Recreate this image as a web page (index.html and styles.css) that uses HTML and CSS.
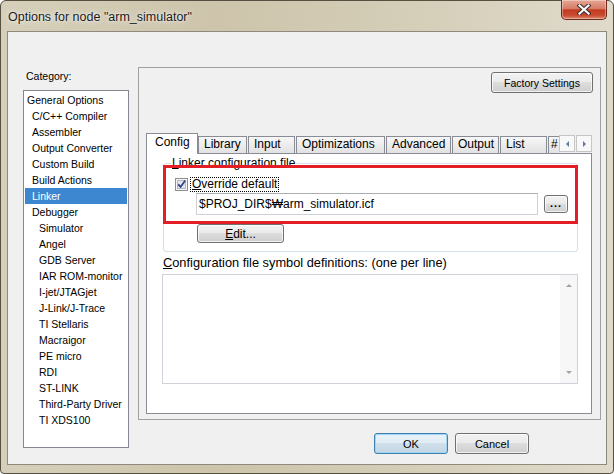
FILE: index.html
```html
<!DOCTYPE html>
<html>
<head>
<meta charset="utf-8">
<link rel="stylesheet" href="styles.css">
</head>
<body>
<div class="window">
  <div class="titlebar">
    <span class="title">Options for node "arm_simulator"</span>
    <div class="close">
      <svg width="14" height="11" viewBox="0 0 14 11"><path d="M2.5 1.5 L11.5 9.5 M11.5 1.5 L2.5 9.5" stroke="#3b2b2b" stroke-width="4.2" stroke-linecap="square" fill="none"/><path d="M2.5 1.5 L11.5 9.5 M11.5 1.5 L2.5 9.5" stroke="#fff" stroke-width="2.2" stroke-linecap="square" fill="none"/></svg>
    </div>
  </div>
  <div class="client">
    <div class="left">
      <div class="cat-label">Category:</div>
      <ul class="list">
        <li class="l0">General Options</li>
        <li class="l1">C/C++ Compiler</li>
        <li class="l1">Assembler</li>
        <li class="l1">Output Converter</li>
        <li class="l1">Custom Build</li>
        <li class="l1">Build Actions</li>
        <li class="l1 sel">Linker</li>
        <li class="l1">Debugger</li>
        <li class="l2">Simulator</li>
        <li class="l2">Angel</li>
        <li class="l2">GDB Server</li>
        <li class="l2">IAR ROM-monitor</li>
        <li class="l2">I-jet/JTAGjet</li>
        <li class="l2">J-Link/J-Trace</li>
        <li class="l2">TI Stellaris</li>
        <li class="l2">Macraigor</li>
        <li class="l2">PE micro</li>
        <li class="l2">RDI</li>
        <li class="l2">ST-LINK</li>
        <li class="l2">Third-Party Driver</li>
        <li class="l2">TI XDS100</li>
      </ul>
    </div>
    <div class="right">
      <div class="panel">
        <div class="panel-top"><button class="btn factory">Factory Settings</button></div>
        <div class="tabs">
          <div class="tabstrip">
            <div class="tab active t-config">Config</div>
            <div class="tab t-library">Library</div>
            <div class="tab t-input">Input</div>
            <div class="tab t-optim">Optimizations</div>
            <div class="tab t-adv">Advanced</div>
            <div class="tab t-output">Output</div>
            <div class="tab t-list">List</div>
            <div class="tab t-more">#</div>
          </div>
          <div class="tab-arrows">
            <div class="arrow"><span class="tri-left"></span></div>
            <div class="arrow"><span class="tri-right"></span></div>
          </div>
        </div>
        <div class="page">
          <div class="group">
            <span class="legend"><u>L</u>inker configuration file</span>
            <div class="check-row">
              <svg class="checkbox" width="13" height="13" viewBox="0 0 13 13"><rect x="0.5" y="0.5" width="12" height="12" fill="#f6f6f6" stroke="#8e8f8f"/><rect x="2.5" y="2.5" width="8" height="8" fill="#e2e6ec" stroke="#b3b8bf"/><path d="M3.2 6.3 L5.6 8.9 L10.2 2.6" stroke="#2c3e8c" stroke-width="1.7" fill="none"/></svg>
              <span class="focus"><u>O</u>verride default</span>
            </div>
            <div class="path-row">
              <div class="textbox">$PROJ_DIR$₩arm_simulator.icf</div>
              <button class="btn browse">...</button>
            </div>
            <button class="btn edit"><span><u>E</u>dit...</span></button>
          </div>
          <div class="defs-label"><u>C</u>onfiguration file symbol definitions: (one per line)</div>
          <div class="defs-box">
            <div class="vscroll"><span class="tri-up"></span><span class="tri-down"></span></div>
          </div>
          <div class="highlight"></div>
        </div>
      </div>
      <div class="dlg-buttons">
        <button class="btn dlg ok">OK</button>
        <button class="btn dlg">Cancel</button>
      </div>
    </div>
  </div>
</div>
</body>
</html>
```
FILE: styles.css
```css
* { box-sizing: border-box; }
html, body { margin: 0; padding: 0; }
body {
  width: 614px;
  height: 474px;
  overflow: hidden;
  font-family: "Liberation Sans", Arial, sans-serif;
  color: #000;
  background: #fff;
}
.window {
  width: 614px;
  height: 474px;
  border: 1px solid #55503f;
  border-radius: 6px 6px 4px 4px;
  background: linear-gradient(90deg, #d6cfba 0%, #cdc4ab 35%, #d4cdb7 65%, #dfdacb 100%);
  padding: 0 6px 8px;
  display: flex;
  flex-direction: column;
}
.titlebar {
  height: 30px;
  flex: none;
  display: flex;
  align-items: flex-start;
  justify-content: space-between;
  padding-left: 1px;
}
.title {
  font-size: 12.5px;
  line-height: 14px;
  margin-top: 9px;
  white-space: nowrap;
  color: #1a1a1a;
  text-shadow: 0 0 6px rgba(255,255,255,.9), 0 0 2px rgba(255,255,255,.8);
}
.close {
  width: 46px;
  height: 20px;
  margin-top: -1px;
  border: 1px solid #6f2a1f;
  border-top: none;
  border-radius: 0 0 5px 5px;
  background: linear-gradient(#e6a797 0%, #d67c66 45%, #c23b21 52%, #c84a2f 80%, #dc8a6d 100%);
  box-shadow: inset 0 0 0 1px rgba(255,255,255,.35);
  display: flex;
  align-items: center;
  justify-content: center;
}
.client {
  height: 434px;
  flex: none;
  display: flex;
  background: #f0f0f0;
  border: 1px solid #8f8b7c;
}
.left {
  margin-left: 15px;
  width: 106px;
  padding-top: 37px;
  display: flex;
  flex-direction: column;
}
.cat-label {
  font-size: 10.5px;
  line-height: 14px;
  padding-left: 3px;
  margin-bottom: 7px;
}
.list {
  margin: 0;
  padding: 1px 1px 0;
  list-style: none;
  height: 358px;
  border: 1px solid #828790;
  background: #fff;
}
.list li {
  height: 16px;
  line-height: 16px;
  font-size: 10.5px;
  white-space: nowrap;
}
.l0 { padding-left: 2px; }
.l1 { padding-left: 7px; }
.l2 { padding-left: 14px; }
.list .sel { background: #3d87d0; color: #fff; }

.right {
  margin-left: 9px;
  width: 463px;
  display: flex;
  flex-direction: column;
}
.panel {
  margin-top: 35px;
  height: 353px;
  border: 1px solid #a0a0a0;
  padding: 4px 7px 0 7px;
  display: flex;
  flex-direction: column;
}
.panel-top { display: flex; justify-content: flex-end; }

.btn {
  font-family: inherit;
  color: #000;
  border: 1px solid #707070;
  border-radius: 3px;
  background: linear-gradient(#f2f2f2 0%, #ebebeb 45%, #dddddd 50%, #cfcfcf 100%);
  box-shadow: inset 0 0 0 1px rgba(255,255,255,.7);
  padding: 0;
  display: flex;
  align-items: center;
  justify-content: center;
  white-space: nowrap;
}
.factory { width: 102px; height: 21px; font-size: 10.5px; }

.tabs {
  margin-top: 40px;
  height: 21px;
  width: 446px;
  display: flex;
  flex: none;
}
.tabstrip {
  flex: 1;
  display: flex;
  align-items: flex-end;
  overflow: hidden;
}
.tab {
  flex: none;
  height: 18px;
  border: 1px solid #898c95;
  border-bottom: none;
  background: linear-gradient(#f7f7f7, #e0e0e0);
  font-size: 12px;
  line-height: 15px;
  padding-left: 5px;
  margin-left: 1px;
  white-space: nowrap;
  overflow: hidden;
}
.tab.active {
  height: 21px;
  background: #fff;
  padding-left: 8px;
  padding-top: 1px;
  position: relative;
  z-index: 1;
  margin-left: 0;
}
.t-config { width: 52px; }
.t-library { width: 49px; margin-left: 0; }
.t-input { width: 47px; }
.t-optim { width: 89px; }
.t-adv { width: 65px; }
.t-output { width: 47px; }
.t-list { width: 47px; }
.t-more { width: 40px; padding-left: 2px; }
.tab-arrows {
  flex: none;
  width: 33px;
  height: 17px;
  margin-top: 2px;
  display: flex;
  gap: 1px;
  background: #f0f0f0;
}
.arrow {
  width: 16px;
  height: 17px;
  border: 1px solid #c6c6c6;
  background: #f8f8f8;
  display: flex;
  align-items: center;
  justify-content: center;
}
.tri-left { width: 0; height: 0; border-top: 3px solid transparent; border-bottom: 3px solid transparent; border-right: 3px solid #5d77a8; }
.tri-right { width: 0; height: 0; border-top: 3px solid transparent; border-bottom: 3px solid transparent; border-left: 3px solid #5d77a8; }

.page {
  position: relative;
  width: 446px;
  height: 261px;
  margin-top: -1px;
  border: 1px solid #898c95;
  background: #fff;
  display: flex;
  flex-direction: column;
  align-items: flex-start;
}
.group {
  margin: 9px 0 0 16px;
  width: 415px;
  border: 1px solid #d5dfe5;
  border-radius: 3px;
  padding: 0 0 8px 0;
  display: flex;
  flex-direction: column;
  align-items: flex-start;
}
.legend {
  margin: -8px 0 0 7px;
  padding: 0 1px;
  background: #fff;
  font-size: 12px;
  line-height: 14px;
}
.check-row {
  margin: 7px 0 0 11px;
  display: flex;
  align-items: center;
  height: 15px;
}
.checkbox { display: block; flex: none; }
.focus {
  margin-left: 2px;
  height: 15px;
  border: 1px dotted #000;
  padding: 0 1px;
  font-size: 12px;
  line-height: 13px;
}
.path-row {
  margin: 1px 0 0 32px;
  display: flex;
  align-items: center;
  gap: 6px;
}
.textbox {
  width: 342px;
  height: 22px;
  border: 1px solid #cdd1d7;
  border-top-color: #abadb3;
  font-size: 12px;
  line-height: 20px;
  padding-left: 2px;
  white-space: nowrap;
}
.browse { width: 24px; height: 18px; font-size: 11px; font-weight: bold; line-height: 10px; padding-bottom: 3px; letter-spacing: 1px; }
.edit { margin: 9px 0 0 33px; width: 87px; height: 19px; font-size: 12px; }

.defs-label {
  margin: 3px 0 0 16px;
  font-size: 12.8px;
  line-height: 15px;
  white-space: nowrap;
}
.defs-box {
  margin: 4px 0 0 15px;
  width: 416px;
  height: 110px;
  border: 1px solid #cfd2d8;
  display: flex;
  justify-content: flex-end;
}
.vscroll {
  width: 17px;
  height: 100%;
  background: #f7f7f7;
  display: flex;
  flex-direction: column;
  justify-content: space-between;
  align-items: center;
  padding: 9px 0;
}
.tri-up { width: 0; height: 0; border-left: 3px solid transparent; border-right: 3px solid transparent; border-bottom: 3px solid #a4a4a4; }
.tri-down { width: 0; height: 0; border-left: 3px solid transparent; border-right: 3px solid transparent; border-top: 3px solid #a4a4a4; }

.highlight {
  position: absolute;
  left: 16px;
  top: 11px;
  width: 415px;
  height: 59px;
  border: 3px solid #e41e26;
  pointer-events: none;
}

.dlg-buttons {
  margin-top: 13px;
  display: flex;
  justify-content: flex-end;
  gap: 7px;
  padding-right: 72px;
}
.dlg { width: 74px; height: 21px; font-size: 11px; }
.ok {
  border-color: #3c7fb1;
  background: linear-gradient(#eaf3f9 0%, #e1ecf4 45%, #d0dfea 50%, #c3d5e4 100%);
  box-shadow: inset 0 0 0 1px #a6d5f3;
}
```
